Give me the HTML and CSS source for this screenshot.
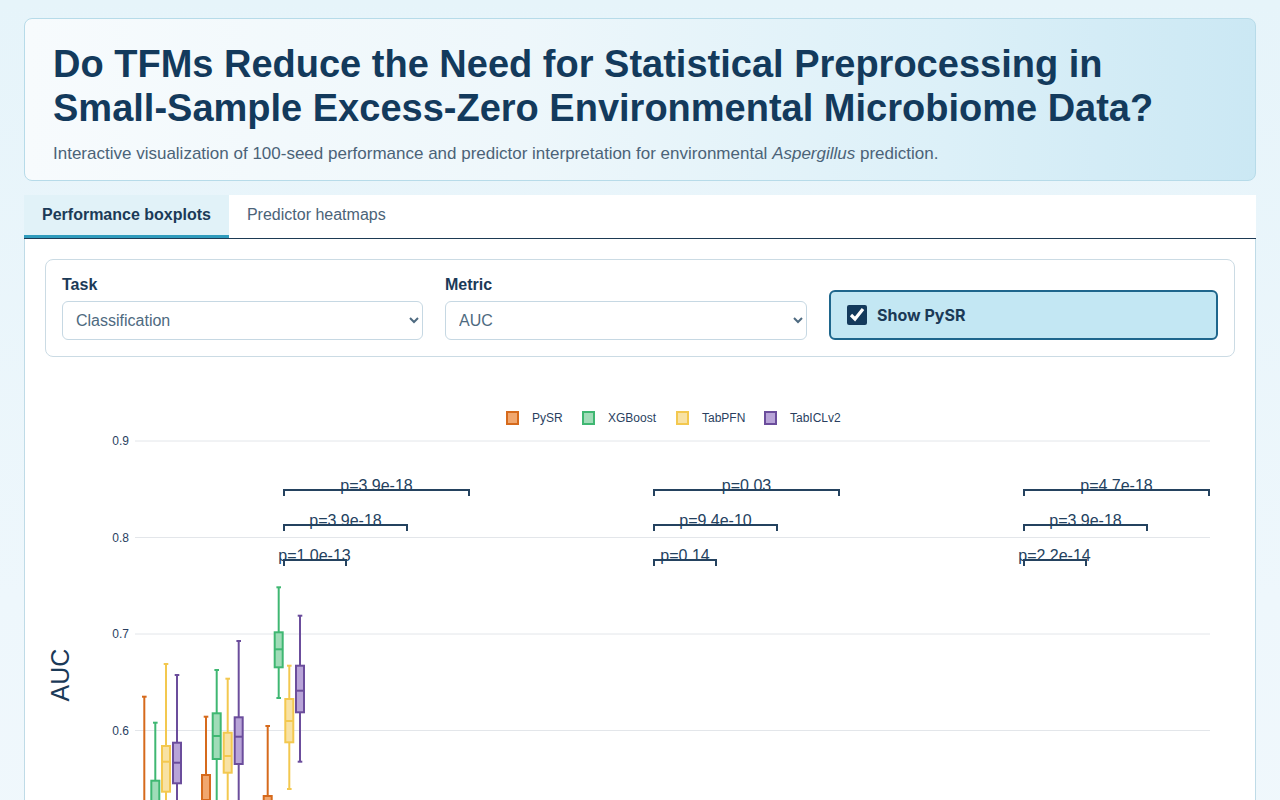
FILE: index.html
```html
<!DOCTYPE html>
<html lang="en">
<head>
<meta charset="utf-8">
<title>Do TFMs Reduce the Need for Statistical Preprocessing</title>
<link rel="stylesheet" href="styles.css">
</head>
<body>
<header class="hero">
  <h1 class="hero-title">Do TFMs Reduce the Need for Statistical Preprocessing in Small-Sample Excess-Zero Environmental Microbiome Data?</h1>
  <p class="hero-sub">Interactive visualization of 100-seed performance and predictor interpretation for environmental <em>Aspergillus</em> prediction.</p>
</header>

<nav class="tabs">
  <button class="tab tab-active">Performance boxplots</button>
  <button class="tab">Predictor heatmaps</button>
</nav>

<main class="panel">
  <section class="controls">
    <div class="field">
      <label class="field-label" for="task">Task</label>
      <select id="task" class="select"><option>Classification</option><option>Regression</option></select>
    </div>
    <div class="field">
      <label class="field-label" for="metric">Metric</label>
      <select id="metric" class="select"><option>AUC</option><option>Accuracy</option></select>
    </div>
    <label class="toggle">
      <input type="checkbox" class="toggle-box" checked>
      <span class="toggle-text">Show PySR</span>
    </label>
  </section>

  <div class="chart">
    <svg class="chart-svg" width="1230" height="640" viewBox="0 0 1230 640" xmlns="http://www.w3.org/2000/svg">
      <g transform="translate(-25,-357)">
        <!-- legend -->
        <g class="legend">
          <rect class="c-pysr" x="507" y="412" width="11" height="12"/>
          <text x="532" y="422">PySR</text>
          <rect class="c-xgb" x="583" y="412" width="11" height="12"/>
          <text x="608" y="422">XGBoost</text>
          <rect class="c-pfn" x="677" y="412" width="11" height="12"/>
          <text x="702" y="422">TabPFN</text>
          <rect class="c-icl" x="765" y="412" width="11" height="12"/>
          <text x="790" y="422">TabICLv2</text>
        </g>

        <!-- grid -->
        <g class="grid">
          <line x1="135" y1="441" x2="1210" y2="441"/>
          <line x1="135" y1="537.5" x2="1210" y2="537.5"/>
          <line x1="135" y1="634" x2="1210" y2="634"/>
          <line x1="135" y1="730.5" x2="1210" y2="730.5"/>
        </g>
        <g class="ticks">
          <text x="129" y="445">0.9</text>
          <text x="129" y="541.5">0.8</text>
          <text x="129" y="638">0.7</text>
          <text x="129" y="734.5">0.6</text>
        </g>
        <text class="axis-title" x="69" y="675" transform="rotate(-90 69 675)">AUC</text>

        <!-- boxplots: group 1 -->
        <g class="box c-pysr">
          <line x1="144.3" y1="696.7" x2="144.3" y2="815"/><line x1="142" y1="696.7" x2="146.6" y2="696.7"/>
          <rect x="140.3" y="815" width="8" height="65"/><line x1="140.3" y1="845" x2="148.3" y2="845"/>
          <line x1="144.3" y1="880" x2="144.3" y2="940"/>
        </g>
        <g class="box c-xgb">
          <line x1="155.3" y1="722.7" x2="155.3" y2="780.7"/><line x1="153" y1="722.7" x2="157.6" y2="722.7"/>
          <rect x="151.3" y="780.7" width="8" height="50"/><line x1="151.3" y1="805" x2="159.3" y2="805"/>
          <line x1="155.3" y1="830.7" x2="155.3" y2="870"/>
        </g>
        <g class="box c-pfn">
          <line x1="166" y1="664" x2="166" y2="746"/><line x1="163.7" y1="664" x2="168.3" y2="664"/>
          <rect x="162" y="746" width="8" height="45.7"/><line x1="162" y1="761.7" x2="170" y2="761.7"/>
          <line x1="166" y1="791.7" x2="166" y2="830"/>
        </g>
        <g class="box c-icl">
          <line x1="177" y1="675" x2="177" y2="742.7"/><line x1="174.7" y1="675" x2="179.3" y2="675"/>
          <rect x="173" y="742.7" width="8" height="40.6"/><line x1="173" y1="762.7" x2="181" y2="762.7"/>
          <line x1="177" y1="783.3" x2="177" y2="822"/>
        </g>

        <!-- group 2 -->
        <g class="box c-pysr">
          <line x1="206" y1="716.7" x2="206" y2="775"/><line x1="203.7" y1="716.7" x2="208.3" y2="716.7"/>
          <rect x="202" y="775" width="8" height="55"/><line x1="202" y1="800" x2="210" y2="800"/>
          <line x1="206" y1="830" x2="206" y2="880"/>
        </g>
        <g class="box c-xgb">
          <line x1="216.7" y1="670" x2="216.7" y2="713.3"/><line x1="214.4" y1="670" x2="219" y2="670"/>
          <rect x="212.7" y="713.3" width="8" height="45.7"/><line x1="212.7" y1="736" x2="220.7" y2="736"/>
          <line x1="216.7" y1="759" x2="216.7" y2="815"/>
        </g>
        <g class="box c-pfn">
          <line x1="227.7" y1="678.7" x2="227.7" y2="732.7"/><line x1="225.4" y1="678.7" x2="230" y2="678.7"/>
          <rect x="223.7" y="732.7" width="8" height="40"/><line x1="223.7" y1="756" x2="231.7" y2="756"/>
          <line x1="227.7" y1="772.7" x2="227.7" y2="815"/>
        </g>
        <g class="box c-icl">
          <line x1="238.7" y1="641" x2="238.7" y2="717.3"/><line x1="236.4" y1="641" x2="241" y2="641"/>
          <rect x="234.7" y="717.3" width="8" height="46.7"/><line x1="234.7" y1="736.7" x2="242.7" y2="736.7"/>
          <line x1="238.7" y1="764" x2="238.7" y2="820"/>
        </g>

        <!-- group 3 -->
        <g class="box c-pysr">
          <line x1="267.7" y1="726" x2="267.7" y2="796"/><line x1="265.4" y1="726" x2="270" y2="726"/>
          <rect x="263.7" y="796" width="8" height="54"/><line x1="263.7" y1="820" x2="271.7" y2="820"/>
          <line x1="267.7" y1="850" x2="267.7" y2="900"/>
        </g>
        <g class="box c-xgb">
          <line x1="278.7" y1="587.3" x2="278.7" y2="632.3"/><line x1="276.4" y1="587.3" x2="281" y2="587.3"/>
          <rect x="274.7" y="632.3" width="8" height="35"/><line x1="274.7" y1="649.3" x2="282.7" y2="649.3"/>
          <line x1="278.7" y1="667.3" x2="278.7" y2="698"/><line x1="276.4" y1="698" x2="281" y2="698"/>
        </g>
        <g class="box c-pfn">
          <line x1="289.3" y1="665.7" x2="289.3" y2="699"/><line x1="287" y1="665.7" x2="291.6" y2="665.7"/>
          <rect x="285.3" y="699" width="8" height="43.3"/><line x1="285.3" y1="721" x2="293.3" y2="721"/>
          <line x1="289.3" y1="742.3" x2="289.3" y2="789"/><line x1="287" y1="789" x2="291.6" y2="789"/>
        </g>
        <g class="box c-icl">
          <line x1="300" y1="615.7" x2="300" y2="665.7"/><line x1="297.7" y1="615.7" x2="302.3" y2="615.7"/>
          <rect x="296" y="665.7" width="8" height="46.6"/><line x1="296" y1="690.7" x2="304" y2="690.7"/>
          <line x1="300" y1="712.3" x2="300" y2="761.7"/><line x1="297.7" y1="761.7" x2="302.3" y2="761.7"/>
        </g>

        <!-- significance brackets -->
        <g class="bracket">
          <path d="M284 496V490H469V496"/>
          <path d="M284 531V525H407V531"/>
          <path d="M284 566V560H346V566"/>
          <path d="M654 496V490H839V496"/>
          <path d="M654 531V525H777V531"/>
          <path d="M654 566V560H716V566"/>
          <path d="M1024 496V490H1209V496"/>
          <path d="M1024 531V525H1147V531"/>
          <path d="M1024 566V560H1086V566"/>
        </g>
        <g class="pval">
          <text x="376.5" y="491">p=3.9e-18</text>
          <text x="345.5" y="526">p=3.9e-18</text>
          <text x="314.5" y="561">p=1.0e-13</text>
          <text x="746.5" y="491">p=0.03</text>
          <text x="715.5" y="526">p=9.4e-10</text>
          <text x="685" y="561">p=0.14</text>
          <text x="1116.5" y="491">p=4.7e-18</text>
          <text x="1085.5" y="526">p=3.9e-18</text>
          <text x="1054.5" y="561">p=2.2e-14</text>
        </g>
      </g>
    </svg>
  </div>
</main>
</body>
</html>
```

FILE: styles.css
```css
* { box-sizing: border-box; }

html, body { margin: 0; }

body {
  padding: 18px 24px 0;
  background: linear-gradient(180deg, #e6f4fa 0%, #eef7fc 60%, #f1f8fc 100%);
  font-family: "Liberation Sans", Arial, sans-serif;
  color: #143a5c;
  min-height: 100vh;
}

.hero {
  border: 1px solid #b7dbe9;
  border-radius: 8px;
  padding: 24px 28px 14px;
  background: linear-gradient(90deg, #f7fbfd 0%, #eef7fb 40%, #dcf0f8 75%, #cbe8f4 100%);
}

.hero-title {
  margin: 0;
  font-size: 38px;
  line-height: 1.15;
  font-weight: 700;
  color: #133a5c;
}

.hero-sub {
  margin: 12px 0 0;
  font-size: 17px;
  line-height: 24px;
  color: #4b6378;
}

.tabs {
  margin-top: 14px;
  display: flex;
  background: #ffffff;
  border-bottom: 1px solid #1d3a54;
}

.tab {
  font-family: "Liberation Sans", Arial, sans-serif;
  font-size: 16px;
  line-height: 18px;
  padding: 11px 18px 11px;
  border: none;
  border-bottom: 3px solid transparent;
  background: transparent;
  color: #4b6378;
  cursor: pointer;
}

.tab-active {
  background: #e1f2f8;
  border-bottom-color: #2f9cbd;
  color: #1b3a57;
  font-weight: 700;
}

.panel {
  background: #ffffff;
  border: 1px solid #bfdbe7;
  border-top: none;
  padding: 20px 20px 0;
}

.controls {
  border: 1px solid #cbdbe4;
  border-radius: 8px;
  padding: 16px;
  display: grid;
  grid-template-columns: 361px 362px 1fr;
  column-gap: 22px;
  align-items: end;
}

.field {
  display: flex;
  flex-direction: column;
}

.field-label {
  font-size: 16px;
  line-height: 18px;
  font-weight: 700;
  color: #1b3a57;
  margin-bottom: 7px;
}

.select {
  height: 39px;
  width: 100%;
  border: 1px solid #c6d8e3;
  border-radius: 6px;
  padding: 0 10px 0 9px;
  background: #ffffff;
  font-family: "Liberation Sans", Arial, sans-serif;
  font-size: 16px;
  color: #4e6a80;
}

.toggle {
  height: 50px;
  display: flex;
  align-items: center;
  gap: 10px;
  padding: 0 16px;
  border: 2px solid #1e668c;
  border-radius: 6px;
  background: #c3e7f3;
  cursor: pointer;
}

.toggle-box {
  width: 20px;
  height: 20px;
  margin: 0;
  accent-color: #143a5c;
}

.toggle-text {
  font-family: Inter, "Liberation Sans", sans-serif;
  font-size: 16px;
  font-weight: 700;
  color: #1b3a57;
}

.chart {
  margin: 0 -20px;
}

.chart-svg {
  display: block;
  font-family: "Liberation Sans", Arial, sans-serif;
}

.legend text {
  font-size: 12px;
  fill: #2a3f5f;
}

.legend rect {
  stroke-width: 2;
}

.grid line {
  stroke: #e3e6ea;
  stroke-width: 1;
}

.ticks text {
  font-size: 12px;
  fill: #2a3f5f;
  text-anchor: end;
}

.axis-title {
  font-size: 25px;
  fill: #1b3a57;
  text-anchor: middle;
}

.box line, .box rect {
  stroke-width: 2;
}

.c-pysr { stroke: #d66a1c; }
.c-pysr rect, rect.c-pysr { fill: #f1a76e; }
.c-xgb { stroke: #3fb772; }
.c-xgb rect, rect.c-xgb { fill: #a0dcb8; }
.c-pfn { stroke: #f3c84f; }
.c-pfn rect, rect.c-pfn { fill: #f8e2a4; }
.c-icl { stroke: #6b4d9c; }
.c-icl rect, rect.c-icl { fill: #b8a4d8; }

.bracket path {
  fill: none;
  stroke: #24425f;
  stroke-width: 2;
}

.pval text {
  font-size: 16px;
  fill: #24425f;
  text-anchor: middle;
}
```
